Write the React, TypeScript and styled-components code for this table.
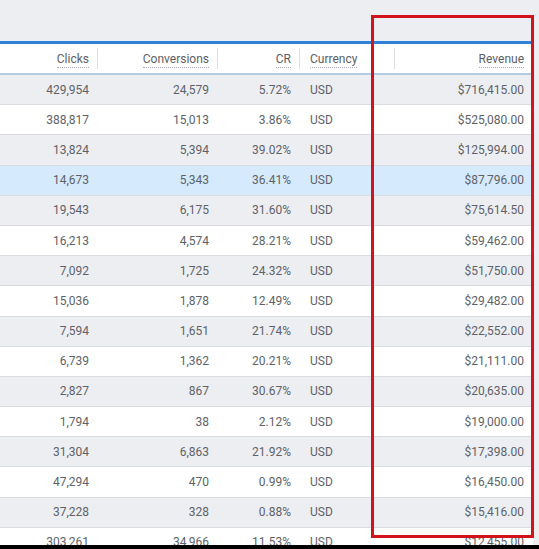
import React from "react";
import styled, { createGlobalStyle } from "styled-components";

const Global = createGlobalStyle`
  html, body { margin: 0; padding: 0; background: #edeef2; }
  body { font-family: Roboto, "Noto Sans", "Liberation Sans", sans-serif; }
`;

type Row = { clicks: string; conv: string; cr: string; cur: string; rev: string };

const rows: Row[] = [
  { clicks: "429,954", conv: "24,579", cr: "5.72%", cur: "USD", rev: "$716,415.00" },
  { clicks: "388,817", conv: "15,013", cr: "3.86%", cur: "USD", rev: "$525,080.00" },
  { clicks: "13,824", conv: "5,394", cr: "39.02%", cur: "USD", rev: "$125,994.00" },
  { clicks: "14,673", conv: "5,343", cr: "36.41%", cur: "USD", rev: "$87,796.00" },
  { clicks: "19,543", conv: "6,175", cr: "31.60%", cur: "USD", rev: "$75,614.50" },
  { clicks: "16,213", conv: "4,574", cr: "28.21%", cur: "USD", rev: "$59,462.00" },
  { clicks: "7,092", conv: "1,725", cr: "24.32%", cur: "USD", rev: "$51,750.00" },
  { clicks: "15,036", conv: "1,878", cr: "12.49%", cur: "USD", rev: "$29,482.00" },
  { clicks: "7,594", conv: "1,651", cr: "21.74%", cur: "USD", rev: "$22,552.00" },
  { clicks: "6,739", conv: "1,362", cr: "20.21%", cur: "USD", rev: "$21,111.00" },
  { clicks: "2,827", conv: "867", cr: "30.67%", cur: "USD", rev: "$20,635.00" },
  { clicks: "1,794", conv: "38", cr: "2.12%", cur: "USD", rev: "$19,000.00" },
  { clicks: "31,304", conv: "6,863", cr: "21.92%", cur: "USD", rev: "$17,398.00" },
  { clicks: "47,294", conv: "470", cr: "0.99%", cur: "USD", rev: "$16,450.00" },
  { clicks: "37,228", conv: "328", cr: "0.88%", cur: "USD", rev: "$15,416.00" },
  { clicks: "303,261", conv: "34,966", cr: "11.53%", cur: "USD", rev: "$12,455.00" },
];

const COLS = "98px 120px 82px 95px 138px";

const Page = styled.div`
  position: relative;
  height: 549px;
  display: flex;
  flex-direction: column;
  overflow: hidden;
  background: #edeef2;
`;

const TopSpace = styled.div`
  height: 41px;
  flex: none;
`;

const TableWrap = styled.div`
  flex: 1;
  overflow: hidden;
  width: 533px;
  border-top: 3px solid #2f80d9;
`;

const HeaderRow = styled.div`
  display: grid;
  grid-template-columns: ${COLS};
  height: 29px;
  background: #ffffff;
  border-bottom: 2px solid #b3cbe4;
  box-sizing: content-box;
`;

const HeadCell = styled.div<{ $left?: boolean; $sep?: boolean }>`
  display: flex;
  align-items: center;
  justify-content: ${(p) => (p.$left ? "flex-start" : "flex-end")};
  padding: ${(p) => (p.$left ? "3px 0 0 10px" : "3px 9px 0 0")};
  position: relative;
  font-size: 12px;
  color: #5c6066;
  &::after {
    content: "";
    display: ${(p) => (p.$sep ? "block" : "none")};
    position: absolute;
    right: 0;
    top: 4px;
    bottom: 4px;
    width: 1px;
    background: #dcdee2;
  }
`;

const HeadLabel = styled.span`
  border-bottom: 1px dotted #a9adb3;
  line-height: 14px;
  padding-bottom: 1px;
`;

const DataRow = styled.div<{ $stripe: boolean; $active?: boolean }>`
  display: grid;
  grid-template-columns: ${COLS};
  height: 30.2px;
  box-sizing: border-box;
  border-bottom: 1px solid #d9dce1;
  background: ${(p) => (p.$active ? "#d5eafc" : p.$stripe ? "#edeef2" : "#ffffff")};
`;

const Cell = styled.div<{ $left?: boolean }>`
  display: flex;
  align-items: center;
  justify-content: ${(p) => (p.$left ? "flex-start" : "flex-end")};
  padding: ${(p) => (p.$left ? "0 0 0 10px" : "0 9px 0 0")};
  font-size: 12px;
  color: #5e6268;
  white-space: nowrap;
`;

const BottomBar = styled.div`
  height: 4px;
  flex: none;
  background: #000;
`;

const Highlight = styled.div`
  position: absolute;
  left: 371px;
  top: 15px;
  width: 163px;
  height: 523px;
  box-sizing: border-box;
  border: 3px solid #d3131c;
  pointer-events: none;
`;

export default function App() {
  return (
    <>
      <Global />
      <Page>
        <TopSpace />
        <TableWrap>
          <HeaderRow>
            <HeadCell $sep>
              <HeadLabel>Clicks</HeadLabel>
            </HeadCell>
            <HeadCell $sep>
              <HeadLabel>Conversions</HeadLabel>
            </HeadCell>
            <HeadCell $sep>
              <HeadLabel>CR</HeadLabel>
            </HeadCell>
            <HeadCell $left $sep>
              <HeadLabel>Currency</HeadLabel>
            </HeadCell>
            <HeadCell>
              <HeadLabel>Revenue</HeadLabel>
            </HeadCell>
          </HeaderRow>
          {rows.map((r, i) => (
            <DataRow key={i} $stripe={i % 2 === 0} $active={i === 3}>
              <Cell>{r.clicks}</Cell>
              <Cell>{r.conv}</Cell>
              <Cell>{r.cr}</Cell>
              <Cell $left>{r.cur}</Cell>
              <Cell>{r.rev}</Cell>
            </DataRow>
          ))}
        </TableWrap>
        <BottomBar />
        <Highlight />
      </Page>
    </>
  );
}
